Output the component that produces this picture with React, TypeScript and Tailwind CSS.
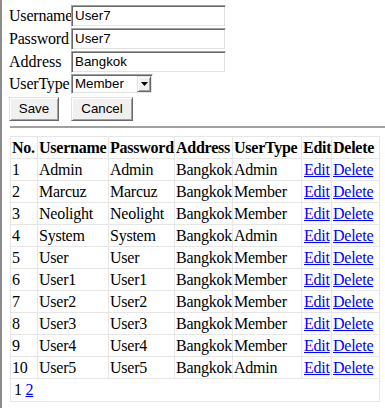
import React from 'react';

const USERS = [
  ['1', 'Admin', 'Admin', 'Bangkok', 'Admin'],
  ['2', 'Marcuz', 'Marcuz', 'Bangkok', 'Member'],
  ['3', 'Neolight', 'Neolight', 'Bangkok', 'Member'],
  ['4', 'System', 'System', 'Bangkok', 'Admin'],
  ['5', 'User', 'User', 'Bangkok', 'Member'],
  ['6', 'User1', 'User1', 'Bangkok', 'Member'],
  ['7', 'User2', 'User2', 'Bangkok', 'Member'],
  ['8', 'User3', 'User3', 'Bangkok', 'Member'],
  ['9', 'User4', 'User4', 'Bangkok', 'Member'],
  ['10', 'User5', 'User5', 'Bangkok', 'Admin'],
];

const inset =
  'border border-t-[#a0a0a0] border-l-[#a0a0a0] border-r-white border-b-white shadow-[inset_1px_1px_0_#696969,inset_-1px_-1px_0_#e3e3e3] bg-white';
const outset =
  'border border-t-[#e3e3e3] border-l-[#e3e3e3] border-r-[#696969] border-b-[#696969] shadow-[inset_1px_1px_0_#ffffff,inset_-1px_-1px_0_#a0a0a0] bg-[#f0f0f0]';

function TextBox({ value }: { value: string }) {
  return (
    <div className={`${inset} w-[155px] h-[22px] px-[3px] flex items-center text-[13.33px] font-['Liberation_Sans',Arial,sans-serif]`}>
      {value}
    </div>
  );
}

export default function App() {
  const cell = 'border border-[#e6e6e6] px-[1px] py-0 leading-[20px] text-left align-middle whitespace-nowrap overflow-visible tracking-[-0.25px]';
  return (
    <div className="w-[385px] h-[408px] bg-white border-l-2 border-[#8c8c8c] overflow-hidden font-['Liberation_Serif','Times_New_Roman',serif] text-[16px] text-black">
      {/* form */}
      <div className="pt-[5px] pl-[7px] grid grid-cols-[62px_auto] gap-y-[1px] items-center">
        <span className="leading-[22px] tracking-[-0.2px]">Username</span>
        <TextBox value="User7" />
        <span className="leading-[22px] tracking-[-0.2px]">Password</span>
        <TextBox value="User7" />
        <span className="leading-[22px]">Address</span>
        <TextBox value="Bangkok" />
        <span className="leading-[20px] tracking-[-0.2px]">UserType</span>
        <div className={`${inset} w-[82px] h-[20px] flex items-center justify-between pl-[3px] pr-[1px] text-[13.33px] font-['Liberation_Sans',Arial,sans-serif]`}>
          <span>Member</span>
          <span className={`${outset} w-[14px] h-[16px] flex items-center justify-center`}>
            <svg width="7" height="4" viewBox="0 0 7 4"><path d="M0 0h7L3.5 4z" fill="#000" /></svg>
          </span>
        </div>
        <div className="mt-[1px]">
          <button className={`${outset} w-[50px] h-[24px] text-[13.33px] font-['Liberation_Sans',Arial,sans-serif]`}>Save</button>
        </div>
        <div className="mt-[1px]">
          <button className={`${outset} w-[62px] h-[24px] text-[13.33px] font-['Liberation_Sans',Arial,sans-serif]`}>Cancel</button>
        </div>
      </div>

      <div className="ml-[8px] mt-[5px] border-t-2 border-[#a0a0a0]" />

      {/* list */}
      <table className="ml-[8px] mt-[8px] w-[369px] table-fixed border-collapse border border-t-[#dcdcdc] border-l-[#dcdcdc] border-r-[#a0a0a0] border-b-[#a0a0a0]">
        <colgroup>
          <col className="w-[27px]" />
          <col className="w-[71px]" />
          <col className="w-[66px]" />
          <col className="w-[58px]" />
          <col className="w-[69px]" />
          <col className="w-[30px]" />
          <col className="w-[48px]" />
        </colgroup>
        <thead>
          <tr className="h-[22px]">
            {['No.', 'Username', 'Password', 'Address', 'UserType', 'Edit', 'Delete'].map((h) => (
              <th key={h} className={`${cell} font-bold`}>{h}</th>
            ))}
          </tr>
        </thead>
        <tbody>
          {USERS.map((u) => (
            <tr key={u[0]} className="h-[22px]">
              {u.map((v, i) => (
                <td key={i} className={cell}>{v}</td>
              ))}
              <td className={`${cell} pl-[2px]`}><a href="#" className="text-[#0000ff] underline">Edit</a></td>
              <td className={cell}><a href="#" className="text-[#0000ff] underline">Delete</a></td>
            </tr>
          ))}
          <tr className="h-[23px]">
            <td colSpan={7} className={`${cell} pl-[3px]`}>
              1 <a href="#" className="text-[#0000ff] underline">2</a>
            </td>
          </tr>
        </tbody>
      </table>
    </div>
  );
}
